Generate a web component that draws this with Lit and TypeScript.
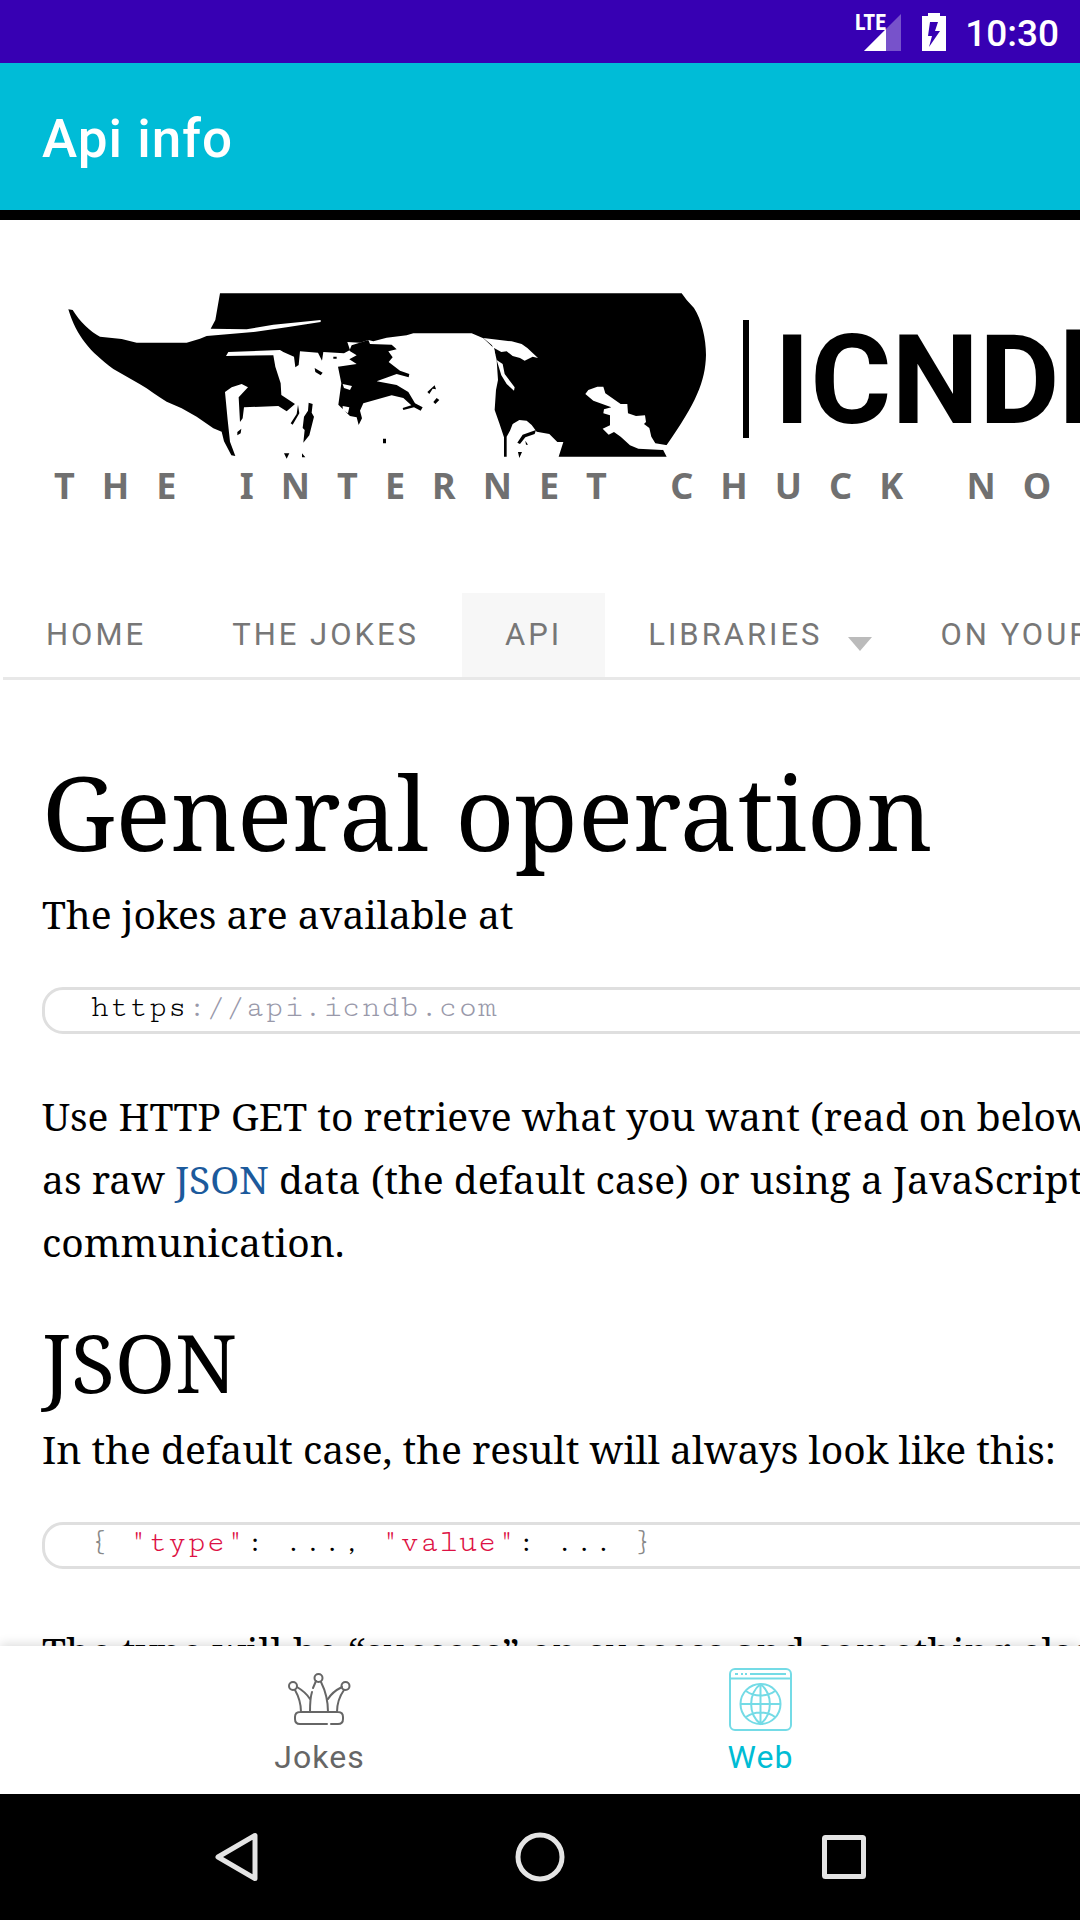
import { LitElement, html, css, svg } from "lit";
import { customElement } from "lit/decorators.js";

@customElement("status-bar")
class StatusBar extends LitElement {
  static styles = css`
    :host { display: flex; align-items: center; justify-content: flex-end; height: 63px; padding-right: 21px; background: #3700b3; color: #fff; flex: none; }
    .signal { width: 48px; height: 40px; margin-right: 18px; }
    .battery { width: 26px; height: 40px; margin-right: 18px; }
    .lte { font: 700 22px "Roboto Condensed", "Open Sans Condensed", Roboto, sans-serif; fill: #fff; }
    .time { font: 500 37px/40px Roboto, sans-serif; padding-top: 4px; }
  `;
  render() {
    return html`
      <svg class="signal" viewBox="0 0 48 40" role="img" aria-label="LTE signal">
        <path d="M46 2V39H9z" fill="#fff" fill-opacity=".32" />
        <path d="M31 17V39H9z" fill="#fff" />
        <path d="M0 0H26V19H0z" fill="#3700b3" />
        <text class="lte" x="0" y="18">LTE</text>
      </svg>
      <svg class="battery" viewBox="0 0 26 40" role="img" aria-label="Battery charging">
        <path d="M1 4H7V1H19V4H25V39H1z" fill="#fff" />
        <path d="M9 10H17L14 19H19L8 35L11 24H7z" fill="#3700b3" />
      </svg>
      <span class="time">10:30</span>
    `;
  }
}

@customElement("site-logo")
class SiteLogo extends LitElement {
  static styles = css`
    :host { display: block; }
    .art { display: block; width: 1240px; height: 240px; }
    .name { font: 700 124px Roboto, sans-serif; fill: #000; }
    .tag { font: 700 36px "Noto Sans", sans-serif; fill: #707070; letter-spacing: 27px; }
  `;
  render() {
    return html`
      <svg class="art" viewBox="0 0 1240 240" role="img" aria-label="ICNDb, The Internet Chuck Norris Database">
        <g transform="scale(.33333)">
          <path d="M85 118L98 120C120 155 150 185 180 200L245 207L290 218H440L480 206L500 198L640 186L740 172L842 156V150L700 164L620 178L512 176L526 150L540 70H1925L1940 90L1962 114C1985 150 1998 205 1998 255C1996 335 1968 400 1880 525L1866 533L1880 560H1556L1570 516L1552 516L1528 492L1490 485L1475 465L1460 452L1438 450L1418 462L1410 482L1400 500V560H1392V502L1378 460L1364 420L1368 360L1374 330L1370 270L1362 235L1330 205L1295 190H1120L1100 196L1040 203L1000 214L985 210L960 218L922 216L930 240L912 250L850 246L846 272L834 248L780 244L776 285L766 292L762 260L730 246L720 240L565 246L558 258L700 256L706 290L722 340L724 375L765 402L740 424L715 408L612 412L608 445L600 456L596 382L624 352L605 342L575 352L555 366L563 450L570 515L586 558L574 556L552 514L545 485L520 475L470 440L425 415L380 395C350 378 330 360 300 343L220 297C150 245 110 200 85 118Z" />
          <path d="M935 226L985 210L990 222L1055 224L1070 238L1045 244L1058 262L1046 276L1080 302L1108 312L1106 322L1070 312L1010 334L1070 345L1105 366L1125 400L1148 412L1142 422L1122 412L1090 420L1088 414L1114 406L1090 384L1055 376L970 400L960 422L966 445L956 465L950 442L930 438L895 404L904 340L894 290L950 282L928 268L950 256L928 242Z" />
          <path d="M774 404L778 430L758 464L752 460L770 432ZM806 398L818 402L815 428L822 440L808 496L790 518L794 480L788 474L792 440L804 422ZM824 294L848 308L842 316L826 306ZM592 486L604 476L602 490L592 496ZM1029 506H1038V520H1029ZM1162 366L1184 346L1188 358L1178 356L1168 372ZM1190 384L1198 390L1186 402L1180 396ZM732 550H748L740 566ZM786 550L796 562H786ZM880 260H890V266H880ZM1432 518L1448 494L1488 480L1484 492L1456 502L1440 522ZM1434 546H1446L1438 564ZM1456 512L1464 524H1458Z" />
          <g fill="#fff">
            <path d="M1330 204L1415 214L1445 222L1462 234L1494 264L1478 260L1454 272L1440 264L1418 258L1400 244L1384 246L1362 234L1366 256L1356 226Z" />
            <path d="M1370 270L1388 282L1394 312L1424 352L1422 362L1400 342L1384 316Z" />
            <path d="M1636 372L1645 360L1672 350H1690L1696 370L1742 402L1762 402L1764 430L1788 438L1815 436L1818 456L1812 462L1828 474L1834 500L1846 520L1882 526L1868 540L1795 536L1770 526L1742 500L1722 486L1706 494L1688 476L1710 466V436L1690 430L1692 418L1714 412L1660 392Z" />
            <path d="M908 342L936 348L930 360L912 354ZM908 408L928 412L924 430L908 420Z" />
          </g>
        </g>
        <path d="M703 50H709V168H703z" />
        <text class="name" x="734" y="153">ICNDb</text>
        <text class="tag" x="14" y="229">THE INTERNET CHUCK NORRIS DATABASE</text>
      </svg>
    `;
  }
}

@customElement("site-menu")
class SiteMenu extends LitElement {
  static styles = css`
    :host { display: block; }
    .menu { display: flex; margin-left: 3px; border-bottom: 3px solid #e8e8e8; white-space: nowrap; width: max-content; min-width: 100%; }
    .entry { display: flex; align-items: center; box-sizing: border-box; height: 84px; padding: 0 43px 2px; font: 400 31px Roboto, sans-serif; letter-spacing: 3px; color: #777; text-decoration: none; }
    .current { background: #f7f7f7; }
    .arrow { width: 26px; height: 14px; margin: 20px -18px 0 24px; }
  `;
  render() {
    return html`
      <nav class="menu" aria-label="Site">
        <a class="entry" href="#home">HOME</a>
        <a class="entry" href="#jokes">THE JOKES</a>
        <a class="entry current" href="#api" aria-current="page">API</a>
        <a class="entry" href="#libraries">LIBRARIES
          <svg class="arrow" viewBox="0 0 26 14" aria-hidden="true"><path d="M1 0H25L13 14z" fill="#bbb" /></svg>
        </a>
        <a class="entry" href="#site">ON YOUR SITE</a>
      </nav>
    `;
  }
}

@customElement("tab-bar")
class TabBar extends LitElement {
  static styles = css`
    :host { display: flex; justify-content: center; height: 148px; flex: none; background: #fff; box-shadow: 0 -2px 10px rgba(0, 0, 0, 0.14); position: relative; }
    .tab { display: flex; flex-direction: column; align-items: center; flex: 1; max-width: 441px; box-sizing: border-box; padding-top: 22px; gap: 7px; color: #666; text-decoration: none; font: 400 32px/38px Roboto, sans-serif; letter-spacing: 1px; }
    .active { color: #00bcd4; }
    .icon { width: 63px; height: 63px; fill: none; stroke: currentColor; stroke-width: 2; }
    .active .icon { stroke: #74dbe6; }
  `;
  render() {
    return html`
      <a class="tab" href="#jokes">
        <svg class="icon" viewBox="0 0 63 63" stroke-linecap="round" aria-hidden="true">
          <circle cx="30.500" cy="10" r="4" /><circle cx="5" cy="18" r="4" /><circle cx="57.500" cy="18" r="4" />
          <path d="M43 56H50C53 56 55 54 55 51V49C55 46 53 44 50 44H12C9 44 7 46 7 49V51C7 54 9 56 12 56H39M7 22C11 29 13 36 13 44M56 22C51 29 49 36 49 44M9 19C14 22 19 26 22 31M54 19C48 22 43 26 40 31M28 13L25 20M24 24C22 30 22 37 22 44M33 14C38 24 40 34 40 44" />
        </svg>
        <span>Jokes</span>
      </a>
      <a class="tab active" href="#web" aria-current="page">
        <svg class="icon" viewBox="0 0 63 63" aria-hidden="true">
          <rect x="1" y="1" width="61" height="61" rx="5" />
          <path d="M1 10.500H62M6 6H9M12 6H14M16 6H18M21 6H57" />
          <circle cx="31.500" cy="36" r="20" />
          <path d="M31.500 16V56M11.500 36H51.500M31.500 16C19 26 19 46 31.500 56C44 46 44 26 31.500 16M17 23C25 29 38 29 46 23M17 49C25 43 38 43 46 49" />
        </svg>
        <span>Web</span>
      </a>
    `;
  }
}

@customElement("system-keys")
class SystemKeys extends LitElement {
  static styles = css`
    :host { display: flex; justify-content: center; align-items: center; height: 126px; flex: none; background: #000; }
    .key { display: flex; justify-content: center; flex: 1; max-width: 304px; padding: 0; border: 0; background: none; }
    .glyph { width: 52px; height: 52px; fill: none; stroke: #e4e4e4; stroke-width: 5; stroke-linejoin: round; }
  `;
  render() {
    const key = (label: string, shape: unknown) => html`
      <button class="key" aria-label=${label}><svg class="glyph" viewBox="0 0 52 52">${shape}</svg></button>
    `;
    return html`
      ${key("Back", svg`<path d="M45 4.500V47.500L8 26z" />`)}
      ${key("Home", svg`<circle cx="26" cy="26" r="22" />`)}
      ${key("Recent apps", svg`<rect x="6.500" y="6.500" width="39" height="39" rx="1" />`)}
    `;
  }
}

@customElement("app-root")
class AppRoot extends LitElement {
  static styles = css`
    :host { display: flex; flex-direction: column; height: 100vh; overflow: hidden; background: #fff; }
    .title { flex: none; display: flex; align-items: center; height: 147px; margin: 0; padding: 4px 42px 0; box-sizing: border-box; background: #00bcd7; color: #fff; font: 500 53px Roboto, sans-serif; letter-spacing: 1px; }
    .page { flex: 1; min-height: 0; overflow: hidden; border-top: 10px solid #000; }
    .logo { padding: 50px 0 83px 40px; }
    .article { padding: 68px 0 0 42px; color: #000; font: 400 39px/63px "Noto Serif", "DejaVu Serif", serif; white-space: nowrap; }
    .heading { margin: 0 0 8px; font-weight: 400; font-size: 103px; line-height: 126px; }
    .subheading { margin: 0 0 4px; font-weight: 400; font-size: 81px; line-height: 102px; }
    .text { margin: 0; }
    .code { margin: 42px 0 50px; height: 41px; width: 1200px; padding-left: 45px; border: 3px solid #dfdfdf; border-radius: 21px; font: 400 32px/35px "Cutive Mono", "Liberation Mono", monospace; }
    .gap { margin-bottom: 38px; }
    .link { color: #1c5a9c; text-decoration: none; }
    .comment { color: #99a; }
    .string { color: #dd1144; }
    .brace { color: #888; }
  `;
  render() {
    return html`
      <status-bar></status-bar>
      <h1 class="title">Api info</h1>
      <main class="page">
        <site-logo class="logo"></site-logo>
        <site-menu></site-menu>
        <article class="article">
          <h2 class="heading">General operation</h2>
          <p class="text">The jokes are available at</p>
          <pre class="code">https<span class="comment">://api.icndb.com</span></pre>
          <p class="text gap">Use HTTP GET to retrieve what you want (read on below),<br />as raw <a class="link" href="#json">JSON</a> data (the default case) or using a JavaScript<br />communication.</p>
          <h3 class="subheading" id="json">JSON</h3>
          <p class="text">In the default case, the result will always look like this:</p>
          <pre class="code"><span class="brace">{</span> <span class="string">"type"</span>: ..., <span class="string">"value"</span>: ... <span class="brace">}</span></pre>
          <p class="text">The type will be “success” on success and something else</p>
        </article>
      </main>
      <tab-bar></tab-bar>
      <system-keys></system-keys>
    `;
  }
}
